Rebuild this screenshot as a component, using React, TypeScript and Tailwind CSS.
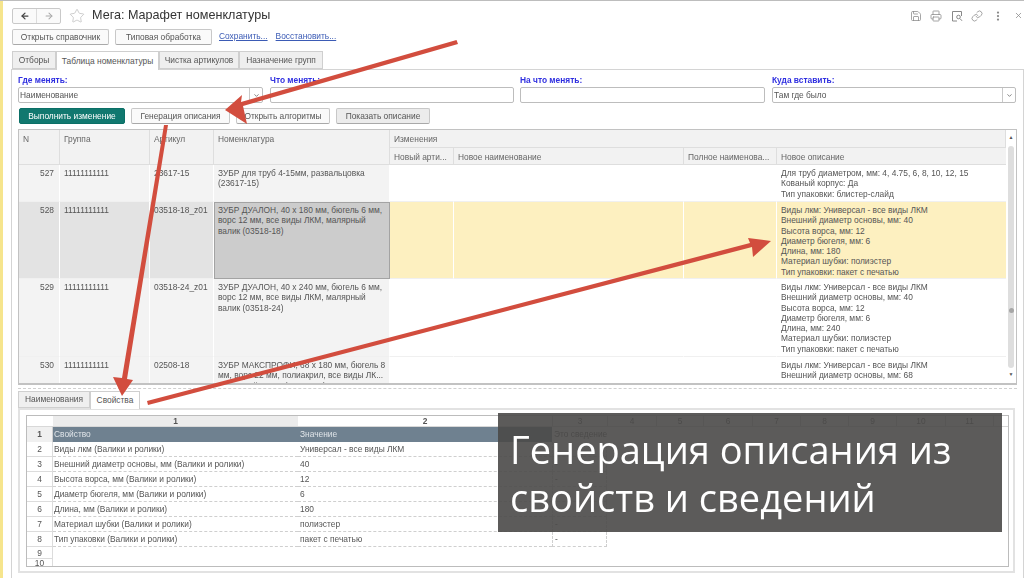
import { ChevronDown, EllipsisVertical, Link, Printer, Save, X, ArrowLeft, ArrowRight, Star } from "lucide-react";

const COLS = "grid-cols-[41px_90px_64px_176px_64px_230px_93px_229px]";

const rows = [
  {
    n: "527",
    sku: "23617-15",
    name: ["ЗУБР для труб 4-15мм, развальцовка", "(23617-15)"],
    desc: ["Для труб диаметром, мм: 4, 4.75, 6, 8, 10, 12, 15", "Кованый корпус: Да", "Тип упаковки: блистер-слайд"],
    h: "h-[37px]",
  },
  {
    n: "528",
    sku: "03518-18_z01",
    name: ["ЗУБР ДУАЛОН, 40 х 180 мм, бюгель 6 мм,", "ворс 12 мм, все виды ЛКМ, малярный", "валик (03518-18)"],
    desc: ["Виды лкм: Универсал - все виды ЛКМ", "Внешний диаметр основы, мм: 40", "Высота ворса, мм: 12", "Диаметр бюгеля, мм: 6", "Длина, мм: 180", "Материал шубки: полиэстер", "Тип упаковки: пакет с печатью"],
    h: "h-[77px]",
    active: true,
  },
  {
    n: "529",
    sku: "03518-24_z01",
    name: ["ЗУБР ДУАЛОН, 40 х 240 мм, бюгель 6 мм,", "ворс 12 мм, все виды ЛКМ, малярный", "валик (03518-24)"],
    desc: ["Виды лкм: Универсал - все виды ЛКМ", "Внешний диаметр основы, мм: 40", "Высота ворса, мм: 12", "Диаметр бюгеля, мм: 6", "Длина, мм: 240", "Материал шубки: полиэстер", "Тип упаковки: пакет с печатью"],
    h: "h-[78px]",
  },
  {
    n: "530",
    sku: "02508-18",
    name: ["ЗУБР МАКСПРОФИ, 68 х 180 мм, бюгель 8", "мм, ворс 22 мм, полиакрил, все виды ЛК...", "малярный валик (02508-18)"],
    desc: ["Виды лкм: Универсал - все виды ЛКМ", "Внешний диаметр основы, мм: 68", "Высота ворса, мм: 22"],
    h: "h-[28px]",
  },
];

const props = [
  ["Виды лкм (Валики и ролики)", "Универсал - все виды ЛКМ"],
  ["Внешний диаметр основы, мм (Валики и ролики)", "40"],
  ["Высота ворса, мм (Валики и ролики)", "12"],
  ["Диаметр бюгеля, мм (Валики и ролики)", "6"],
  ["Длина, мм (Валики и ролики)", "180"],
  ["Материал шубки (Валики и ролики)", "полиэстер"],
  ["Тип упаковки (Валики и ролики)", "пакет с печатью"],
];

const Btn = ({ children, className = "" }: { children: string; className?: string }) => (
  <button className={`h-[16px] rounded-[2px] border border-[#c8c8c8] border-b-[#a9a9a9] bg-[#fafafa] text-[8.4px] leading-none text-[#555] ${className}`}>
    {children}
  </button>
);

const Tab = ({ children, active, className = "" }: { children: string; active?: boolean; className?: string }) => (
  <div className={`flex items-center justify-center border border-[#cfcfcf] text-[8.4px] text-[#555] ${active ? "border-b-0 bg-white" : "bg-[#efefef]"} ${className}`}>
    {children}
  </div>
);

const Lines = ({ items }: { items: string[] }) => (
  <div className="text-[8.4px] leading-[10.25px] whitespace-nowrap text-[#555]">
    {items.map((t) => (
      <div key={t}>{t}</div>
    ))}
  </div>
);

const Head = ({ children, className = "" }: { children?: string; className?: string }) => (
  <div className={`overflow-hidden whitespace-nowrap border-r border-b border-[#dedede] bg-[#f2f2f2] px-[4px] pt-[3px] text-[8.4px] text-[#666] ${className}`}>{children}</div>
);

const Field = ({ label, value, drop, className = "" }: { label: string; value?: string; drop?: boolean; className?: string }) => (
  <div className={`flex flex-col ${className}`}>
    <div className="h-[14px] pt-[2px] text-[8.4px] font-bold leading-[11px] text-[#2f2fe0]">{label}</div>
    <div className="flex h-[16px] items-center rounded-[2px] border border-[#bdbdbd] bg-white pl-[1px] text-[8.4px] text-[#555]">
      <span className="flex-1">{value}</span>
      {drop && (
        <span className="flex h-full w-[13px] items-center justify-center border-l border-[#c9c9c9]">
          <ChevronDown size={7} strokeWidth={3} className="text-[#777]" />
        </span>
      )}
    </div>
  </div>
);

const App = () => {
  const sheetCols = "grid-cols-[26px_245px_254px_55px_49px_47px_49px_48px_48px_48px_49px_48px_16px]";
  return (
    <div className="relative flex h-[578px] w-[1024px] overflow-hidden border-t border-[#bdbdbd] bg-white [font-family:'Liberation_Sans',Arial,sans-serif]">
      <div className="w-[3px] shrink-0 bg-[#f6e58d]" />
      <div className="flex min-w-0 flex-1 flex-col pl-[8px] blur-[0.4px]">
        {/* header */}
        <div className="flex h-[27px] shrink-0 items-center pl-[1px] pt-[2px]">
          <div className="flex h-[16px] w-[49px] rounded-[2px] border border-[#c9c9c9] bg-[#fafafa]">
            <span className="flex flex-1 items-center justify-center border-r border-[#dcdcdc]">
              <ArrowLeft size={10} strokeWidth={3} className="text-[#444]" />
            </span>
            <span className="flex flex-1 items-center justify-center">
              <ArrowRight size={10} strokeWidth={2.5} className="text-[#a8a8a8]" />
            </span>
          </div>
          <Star size={16} strokeWidth={1} className="ml-[8px] text-[#b5b5b5]" />
          <div className="ml-[7px] text-[12.6px] leading-none text-[#333]">Мега: Марафет номенклатуры</div>
          <div className="ml-auto flex items-center gap-[8.5px] pr-[1px] text-[#888]">
            <Save size={12} strokeWidth={1.5} />
            <Printer size={12} strokeWidth={1.5} />
            <svg width="12" height="12" viewBox="0 0 12 12" fill="none" stroke="currentColor" strokeWidth="1">
              <path d="M6 11H1.5V1.5H10.5V6" />
              <circle cx="7.5" cy="7" r="1.8" />
              <path d="M9 8.6L11 10.8" />
            </svg>
            <Link size={12} strokeWidth={1.5} />
            <EllipsisVertical size={12} strokeWidth={2.5} />
            <X size={9} strokeWidth={2} className="ml-[2px]" />
          </div>
        </div>

        {/* command bar */}
        <div className="flex h-[23px] shrink-0 items-start gap-[6px] pl-[1px] pt-[1px]">
          <Btn className="w-[97px]">Открыть справочник</Btn>
          <Btn className="w-[97px]">Типовая обработка</Btn>
          <span className="ml-[1px] text-[8.4px] leading-[15px] text-[#3b5bb5] underline">Сохранить...</span>
          <span className="ml-[2px] text-[8.4px] leading-[15px] text-[#3b5bb5] underline">Восстановить...</span>
        </div>

        {/* main tabs */}
        <div className="flex h-[18px] shrink-0 pl-[1px]">
          <Tab className="w-[44px]">Отборы</Tab>
          <Tab active className="relative z-10 h-[19px] w-[103px]">Таблица номенклатуры</Tab>
          <Tab className="w-[80px]">Чистка артикулов</Tab>
          <Tab className="w-[84px]">Назначение групп</Tab>
        </div>

        {/* panel */}
        <div className="flex h-[510px] shrink-0 flex-col border border-[#d4d4d4] pl-[6px] pr-[6px]">
          <div className="flex h-[33px] shrink-0 gap-[6px] pt-[3px]">
            <Field label="Где менять:" value="Наименование" drop className="w-[245px]" />
            <Field label="Что менять:" className="ml-[1px] w-[244px]" />
            <Field label="На что менять:" className="w-[245px]" />
            <Field label="Куда вставить:" value="Там где было" drop className="ml-[1px] w-[244px]" />
          </div>

          <div className="mt-[5px] flex h-[16px] shrink-0 gap-[6px] pl-[1px]">
            <Btn className="w-[106px] !border-[#0b6f66] !bg-[#11786f] !text-white">Выполнить изменение</Btn>
            <Btn className="w-[99px]">Генерация описания</Btn>
            <Btn className="w-[94px]">Открыть алгоритмы</Btn>
            <Btn className="w-[94px] !bg-[#ececec]">Показать описание</Btn>
          </div>

          {/* table */}
          <div className="relative mt-[5px] flex h-[256px] shrink-0 overflow-hidden border border-b-2 border-[#c2c2c2]">
            <div className="w-[987px] shrink-0">
              <div className={`grid h-[35px] ${COLS} grid-rows-[18px_17px]`}>
                <Head className="row-span-2">N</Head>
                <Head className="row-span-2">Группа</Head>
                <Head className="row-span-2">Артикул</Head>
                <Head className="row-span-2">Номенклатура</Head>
                <Head className="col-span-4">Изменения</Head>
                <Head>Новый арти...</Head>
                <Head>Новое наименование</Head>
                <Head>Полное наименова...</Head>
                <Head className="border-r-0">Новое описание</Head>
              </div>
              {rows.map((r) => {
                const base = r.active ? "bg-[#e3e3e3]" : "bg-[#f3f3f3]";
                const edit = r.active ? "bg-[#fdf0c0]" : "bg-white";
                const cell = "overflow-hidden border-r border-b border-r-white border-b-[#f0f0f0] px-[4px] pt-[3px]";
                return (
                  <div key={r.n} className={`grid ${r.h} ${COLS}`}>
                    <div className={`${cell} ${base} pr-[5px] text-right`}>
                      <Lines items={[r.n]} />
                    </div>
                    <div className={`${cell} ${base}`}>
                      <Lines items={["11111111111"]} />
                    </div>
                    <div className={`${cell} ${base}`}>
                      <Lines items={[r.sku]} />
                    </div>
                    <div className={r.active ? "border border-[#a3a3a3] bg-[#cccccc] px-[3px] pt-[2px]" : `${cell} ${base}`}>
                      <Lines items={r.name} />
                    </div>
                    <div className={`${cell} ${edit}`} />
                    <div className={`${cell} ${edit}`} />
                    <div className={`${cell} ${edit}`} />
                    <div className={`${cell} ${edit} border-r-0`}>
                      <Lines items={r.desc} />
                    </div>
                  </div>
                );
              })}
            </div>
            {/* scrollbar */}
            <div className="flex w-[10px] shrink-0 flex-col items-center bg-white">
              <div className="h-[12px] pt-[5px] text-[5px] leading-none text-[#555]">▲</div>
              <div className="mt-[4px] flex h-[222px] w-[6px] items-center justify-center rounded-[3px] bg-[#dedede]">
                <div className="mt-[106px] h-[5px] w-[5px] rounded-full bg-[#a6a6a6]" />
              </div>
              <div className="mt-[4px] text-[5px] leading-none text-[#555]">▼</div>
            </div>
          </div>

          <div className="mt-[3px] h-[3px] shrink-0 border-t border-dashed border-[#d0d0d0]" />

          {/* lower tabs */}
          <div className="flex h-[17px] shrink-0">
            <Tab className="w-[72px]">Наименования</Tab>
            <Tab active className="relative z-10 h-[18px] w-[50px]">Свойства</Tab>
          </div>

          {/* spreadsheet */}
          <div className="h-[165px] w-[997px] shrink-0 border-2 border-[#e2e2e2] px-[6px] pt-[5px]">
            <div className="h-[152px] w-[983px] overflow-hidden border border-[#bcbcbc] text-[8.4px] text-[#555]">
              <div className={`grid h-[10px] ${sheetCols} text-center font-bold leading-[10px]`}>
                <div />
                <div className="bg-[#ececec]">1</div>
                <div>2</div>
                {["3", "4", "5", "6", "7", "8", "9", "10", "11"].map((c) => (
                  <div key={c} className="border-l border-[#ccc] font-normal">{c}</div>
                ))}
                <div className="border-l border-[#ccc]" />
              </div>
              <div className={`grid h-[16px] ${sheetCols} border-t border-[#d8d8d8] leading-[15px]`}>
                <div className="border-r border-[#cfcfcf] bg-[#f0f0f0] text-center font-bold">1</div>
                <div className="bg-[#6f8190] pl-[1px] text-[#dfe4e8]">Свойство</div>
                <div className="bg-[#6f8190] pl-[2px] text-[#dfe4e8]">Значение</div>
                <div className="overflow-hidden whitespace-nowrap pl-[2px]">Это сведение</div>
              </div>
              {props.map(([a, b], i) => (
                <div key={a} className={`grid h-[15px] ${sheetCols} leading-[14px]`}>
                  <div className="border-r border-b border-[#dcdcdc] text-center">{i + 2}</div>
                  <div className="border-b border-dashed border-[#cfcfcf] pl-[1px]">{a}</div>
                  <div className="border-b border-dashed border-[#cfcfcf] pl-[2px]">{b}</div>
                  <div className="border-x border-b border-dashed border-[#cfcfcf] pl-[2px]">-</div>
                </div>
              ))}
              <div className="h-[12px] w-[26px] border-r border-b border-[#dcdcdc] text-center leading-[12px]">9</div>
              <div className="h-[9px] w-[26px] border-r border-[#dcdcdc] text-center leading-[9px]">10</div>
            </div>
          </div>
        </div>
      </div>

      {/* caption over the spreadsheet */}
      <div className="absolute left-[498px] top-[412px] flex h-[119px] w-[504px] flex-col justify-center whitespace-nowrap bg-[#4a4948]/90 pl-[12px] text-[38px] leading-[48px] text-white [font-family:'Open_Sans',sans-serif]">
        <div>Генерация описания из</div>
        <div>свойств и сведений</div>
      </div>

      {/* arrows */}
      <svg className="pointer-events-none absolute left-0 top-[-1px]" width="1024" height="578" fill="#d24d3e">
        <path d="M456.5 40 L458 44 L243 106 L247 124 L225 110 L242 95 L241 102 Z" />
        <path d="M164 125 L168 125 L127 379 L133 380 L122 396 L113 377 L122 378 Z" />
        <path d="M147 401 L148 405 L752 247 L753 257 L771 241 L748 238 L750 243 Z" />
      </svg>
    </div>
  );
};

export default App;
